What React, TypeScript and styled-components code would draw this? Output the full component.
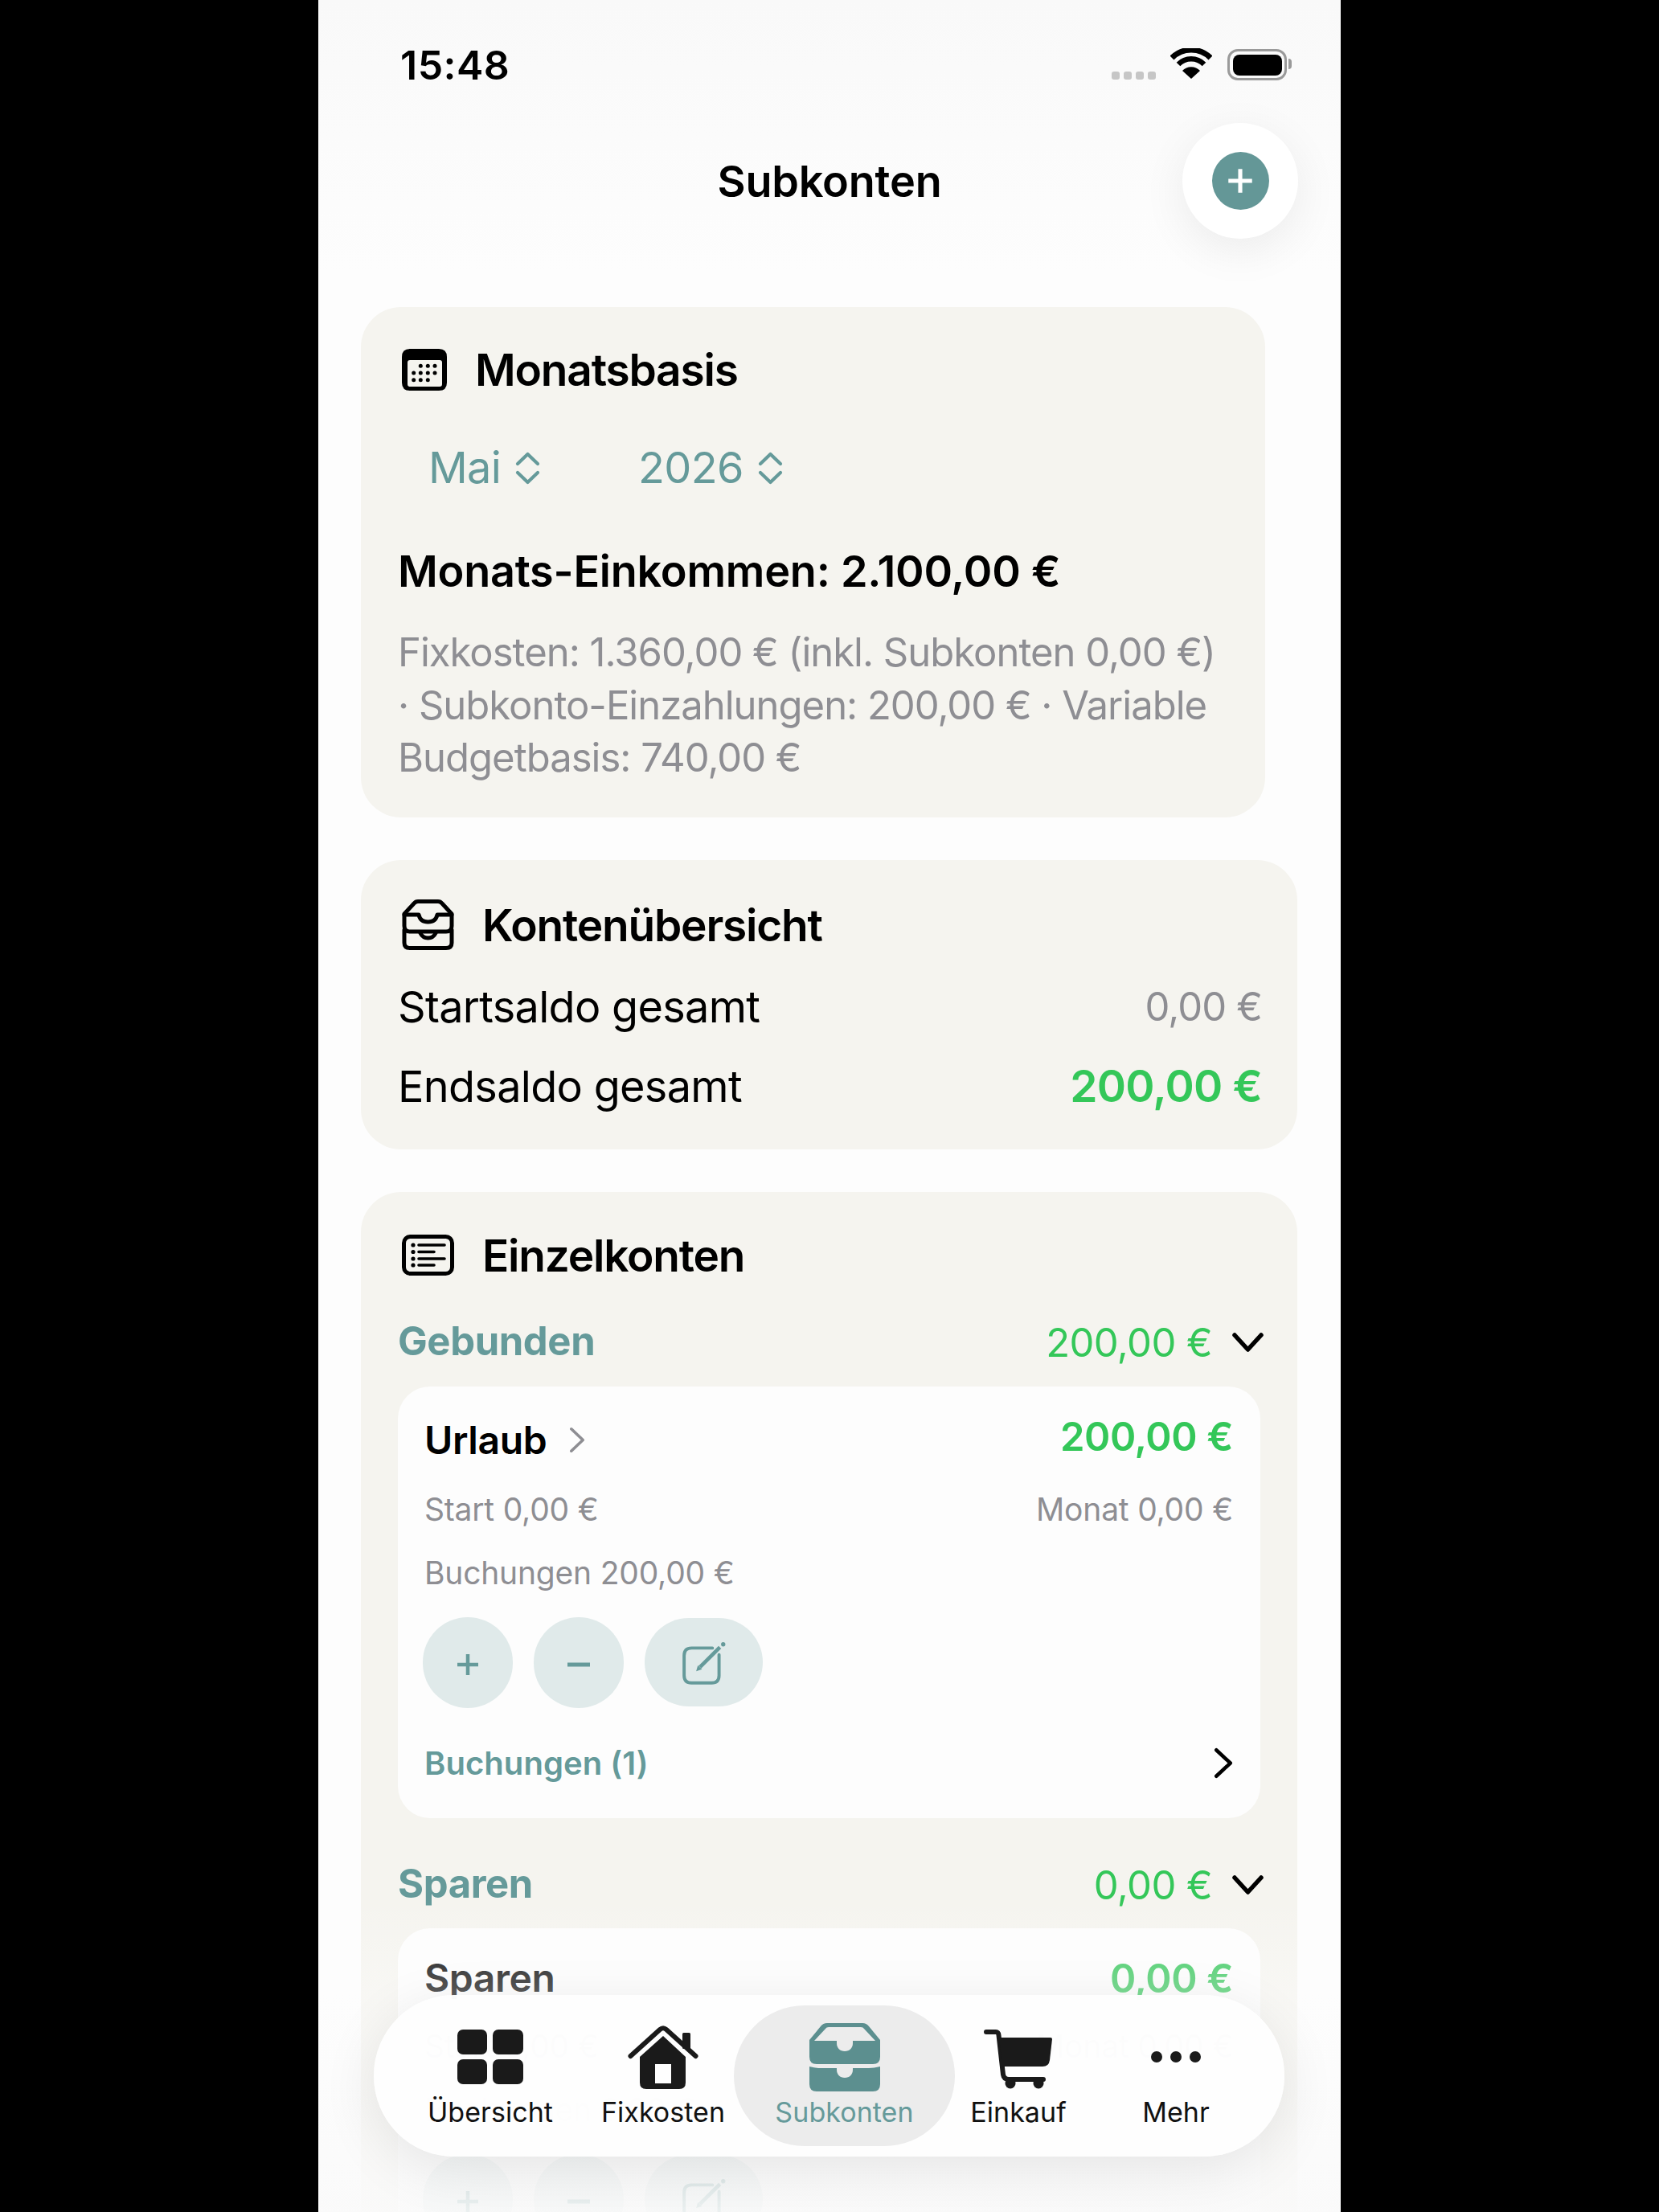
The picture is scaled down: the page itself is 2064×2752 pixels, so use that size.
import React from 'react';
import styled, { createGlobalStyle } from 'styled-components';

const teal = '#659a9a';
const tealDark = '#5c8f8f';
const green = '#34c759';
const gray = '#8e8e93';

const Global = createGlobalStyle`
  html, body { margin: 0; padding: 0; background: #000; }
  body { font-family: Inter, "Noto Sans", "Liberation Sans", sans-serif; -webkit-font-smoothing: antialiased; }
`;

const Stage = styled.div`
  width: 2064px;
  height: 2752px;
  display: flex;
  justify-content: center;
  background: #000;
  overflow: hidden;
`;
const Phone = styled.div`
  position: relative;
  width: 1272px;
  height: 2752px;
  overflow: hidden;
  background: linear-gradient(#f9f9f9 0, #fdfdfd 340px);
  color: #000;
`;
const StatusBar = styled.div`
  height: 153px;
  display: flex;
  justify-content: space-between;
  padding: 0 67px 0 102px;
  box-sizing: border-box;
`;
const Time = styled.div`
  font-size: 50px;
  font-weight: 600;
  line-height: 60px;
  margin-top: 51px;
  letter-spacing: 0.5px;
`;
const StatusIcons = styled.div`
  display: flex;
  align-items: flex-start;
  padding-top: 60px;
`;
const SignalDots = styled.div`
  display: flex;
  gap: 5px;
  margin: 29px 18px 0 0;
`;
const SignalDot = styled.span`
  width: 10px;
  height: 10px;
  border-radius: 3px;
  background: #c6c6c6;
`;
const Battery = styled.div`
  width: 74px;
  height: 39px;
  margin: 1px 0 0 19px;
  box-sizing: border-box;
  border: 3.5px solid #9a9a9a;
  border-radius: 13px;
  padding: 3.5px;
  position: relative;
  &::before {
    content: '';
    display: block;
    height: 100%;
    border-radius: 8px;
    background: #000;
  }
  &::after {
    content: '';
    position: absolute;
    right: -9px;
    top: 9px;
    width: 4px;
    height: 13px;
    border-radius: 0 4px 4px 0;
    background: #9a9a9a;
  }
`;
const Header = styled.header`
  height: 144px;
  display: grid;
  grid-template-columns: 1fr auto 1fr;
  align-items: center;
  padding: 0 53px;
`;
const Title = styled.h1`
  grid-column: 2;
  margin: 2px 0 0;
  font-size: 54px;
  font-weight: 600;
  line-height: 66px;
  letter-spacing: -0.2px;
`;
const AddButton = styled.div`
  justify-self: end;
  width: 144px;
  height: 144px;
  border-radius: 50%;
  background: #fff;
  box-shadow: 0 14px 56px rgba(0, 0, 0, 0.07);
  display: flex;
  align-items: center;
  justify-content: center;
`;
const AddDisc = styled.div`
  width: 71px;
  height: 72px;
  border-radius: 50%;
  background: #649797;
  display: flex;
  align-items: center;
  justify-content: center;
`;
const Content = styled.main`
  margin-top: 85px;
  padding: 0 54px 0 53px;
  display: flex;
  flex-direction: column;
  gap: 53px;
`;
const Card = styled.section<{ $inset?: number }>`
  background: #f5f4ef;
  border-radius: 50px;
  padding: 44px 46px 0;
  margin-right: ${p => p.$inset ?? 0}px;
`;
const CardHeader = styled.div<{ $height: number; $gap: number }>`
  display: flex;
  align-items: center;
  height: ${p => p.$height}px;
  gap: ${p => p.$gap}px;
  padding-left: 5px;
`;
const CardTitle = styled.h2`
  margin: 0;
  font-size: 55px;
  font-weight: 600;
  line-height: 66px;
  letter-spacing: -1.2px;
`;
const Pickers = styled.div`
  display: flex;
  gap: 122px;
  margin: 53px 0 0 38px;
  height: 70px;
  align-items: center;
`;
const Picker = styled.div`
  display: flex;
  align-items: center;
  gap: 18px;
  color: ${teal};
  font-size: 54px;
  line-height: 70px;
  letter-spacing: -0.7px;
`;
const Income = styled.div`
  margin-top: 61px;
  font-size: 54px;
  font-weight: 600;
  line-height: 66px;
  letter-spacing: -0.25px;
`;
const Note = styled.p`
  margin: 35px 0 0;
  padding-bottom: 41px;
  color: ${gray};
  font-size: 49px;
  line-height: 65.5px;
  letter-spacing: -1px;
  white-space: nowrap;
`;
const TotalRows = styled.div`
  margin: 15px -2px 0 0;
  padding-bottom: 29px;
`;
const TotalRow = styled.div`
  height: 99px;
  display: flex;
  align-items: center;
  justify-content: space-between;
`;
const TotalLabel = styled.span`
  font-size: 54px;
  letter-spacing: -0.7px;
`;
const TotalValue = styled.span<{ $strong?: boolean }>`
  font-size: ${p => (p.$strong ? 55 : 49)}px;
  font-weight: ${p => (p.$strong ? 600 : 400)};
  color: ${p => (p.$strong ? green : gray)};
  letter-spacing: ${p => (p.$strong ? -0.8 : -0.9)}px;
`;
const GroupHeader = styled.div<{ $top: number }>`
  height: 60px;
  margin-top: ${p => p.$top}px;
  margin-right: -4px;
  display: flex;
  align-items: center;
  justify-content: space-between;
`;
const GroupName = styled.span`
  color: ${teal};
  font-size: 49px;
  font-weight: 700;
  letter-spacing: -0.4px;
`;
const GroupTotal = styled.span`
  display: flex;
  align-items: center;
  gap: 25px;
  padding-top: 3px;
  color: ${green};
  font-size: 49px;
  letter-spacing: -0.6px;
`;
const Account = styled.article<{ $top: number }>`
  margin-top: ${p => p.$top}px;
  background: #fdfdfd;
  border-radius: 40px;
  padding: 32px 34px 38px 33px;
`;
const AccountHead = styled.div`
  display: flex;
  justify-content: space-between;
  align-items: flex-start;
`;
const AccountName = styled.div<{ $linked?: boolean }>`
  display: flex;
  align-items: center;
  gap: 28px;
  font-size: 48px;
  font-weight: 560;
  line-height: 60px;
  letter-spacing: -0.4px;
  padding-top: ${p => (p.$linked ? 5 : 0)}px;
`;
const AccountAmount = styled.span`
  color: ${green};
  font-size: 49px;
  font-weight: 600;
  line-height: 60px;
  letter-spacing: -0.4px;
  margin-top: 1px;
`;
const MetaRow = styled.div<{ $top: number }>`
  display: flex;
  justify-content: space-between;
  margin-top: ${p => p.$top}px;
  color: ${gray};
  font-size: 39px;
  line-height: 60px;
  letter-spacing: -0.2px;
`;
const Actions = styled.div`
  display: flex;
  align-items: center;
  gap: 26px;
  margin-top: 25px;
  margin-left: -2px;
`;
const RoundAction = styled.div<{ $wide?: boolean }>`
  width: ${p => (p.$wide ? 147 : 112)}px;
  height: ${p => (p.$wide ? 110 : 113)}px;
  border-radius: 56px;
  background: #e0eaea;
  display: flex;
  align-items: center;
  justify-content: center;
  padding: ${p => (p.$wide ? '2px 0 0 3px' : '6px 0 0')};
  box-sizing: border-box;
`;
const BookingLink = styled.div`
  height: 60px;
  margin-top: 39px;
  display: flex;
  align-items: center;
  justify-content: space-between;
  color: ${teal};
  font-size: 40px;
  font-weight: 560;
  letter-spacing: 0.05px;
`;
const Fade = styled.div`
  position: absolute;
  left: 0;
  right: 0;
  bottom: 0;
  height: 390px;
  background: linear-gradient(rgba(253, 253, 253, 0), rgba(253, 253, 253, 0.35) 30%, rgba(250, 250, 250, 0.9));
`;
const TabBar = styled.nav`
  position: absolute;
  left: 69px;
  top: 2482px;
  width: 1133px;
  height: 201px;
  box-sizing: border-box;
  padding: 13px 18px;
  display: grid;
  grid-template-columns: 254px 176px 275px 158px 234px;
  border-radius: 100px;
  background: rgba(254, 254, 254, 0.97);
  box-shadow: 0 16px 70px rgba(0, 0, 0, 0.09);
`;
const Tab = styled.div<{ $active?: boolean }>`
  display: flex;
  flex-direction: column;
  align-items: center;
  height: 175px;
  border-radius: 88px;
  background: ${p => (p.$active ? '#ececec' : 'transparent')};
  color: ${p => (p.$active ? teal : '#111')};
`;
const TabIcon = styled.div<{ $lift: number }>`
  height: 110px;
  display: flex;
  align-items: flex-end;
  justify-content: center;
  padding-bottom: ${p => p.$lift}px;
  box-sizing: border-box;
`;
const TabLabel = styled.span`
  font-size: 34px;
  line-height: 46px;
  letter-spacing: 0.05px;
  white-space: nowrap;
`;

const Plus = ({ size, width, color }: { size: number; width: number; color: string }) => (
  <svg width={size} height={size} viewBox="0 0 30 30">
    <path d="M15 2v26M2 15h26" stroke={color} strokeWidth={width} fill="none" />
  </svg>
);
const Wifi = () => (
  <svg width="52" height="38" viewBox="0 0 52 38">
    <path d="M2 12 A34 34 0 0 1 50 12" fill="none" stroke="#000" strokeWidth="7" />
    <path d="M10 20 A22.5 22.5 0 0 1 42 20" fill="none" stroke="#000" strokeWidth="6.5" />
    <path d="M26 38 L15 28 A15 15 0 0 1 37 28 Z" fill="#000" />
  </svg>
);
const CalendarIcon = () => (
  <svg width="56" height="52" viewBox="0 0 56 52">
    <path fillRule="evenodd" d="M10 0H46Q56 0 56 10V42Q56 52 46 52H10Q0 52 0 42V10Q0 0 10 0ZM10 14Q7 14 7 17V44Q7 47 10 47H47Q50 47 50 44V17Q50 14 47 14Z" fill="#000" />
    {[[23.3, 21.3], [32.3, 21.3], [41, 21.3], [14.7, 30], [23.3, 30], [32.3, 30], [41, 30], [14.7, 38.7], [23.3, 38.7], [32.3, 38.7]].map(([x, y]) => (
      <circle key={`${x}-${y}`} cx={x} cy={y} r="2.5" fill="#000" />
    ))}
  </svg>
);
const TrayIcon = () => (
  <svg width="65" height="63" viewBox="0 0 65 63" fill="none" stroke="#000" strokeWidth="5" strokeLinejoin="round" strokeLinecap="round">
    <path d="M3 18L15 5Q17 2.5 20 2.5H45Q48 2.5 50 5L62 18V33Q62 40 55 40H10Q3 40 3 33Z" />
    <path d="M3 19H21C22 24 25 28 32.5 28C40 28 43 24 44 19H62" />
    <path d="M3 38V54Q3 60.5 10 60.5H55Q62 60.5 62 54V38" />
    <path d="M23 42C25 46 28 48 32.5 48C37 48 40 46 42 42" />
  </svg>
);
const ListIcon = () => (
  <svg width="65" height="51" viewBox="0 0 65 51" fill="none" stroke="#000" strokeLinecap="round">
    <rect x="2.5" y="2.5" width="60" height="46" rx="8" strokeWidth="5" />
    <path d="M21 13H53M21 21.5H40M21 30H53M21 38H40" strokeWidth="3.6" />
    <g fill="#000" stroke="none">
      <circle cx="14" cy="13" r="2.6" />
      <circle cx="14" cy="21.5" r="2.6" />
      <circle cx="14" cy="30" r="2.6" />
      <circle cx="14" cy="38" r="2.6" />
    </g>
  </svg>
);
const UpDown = () => (
  <svg width="31" height="41" viewBox="0 0 31 41" fill="none" stroke={teal} strokeWidth="4.2" strokeLinecap="round" strokeLinejoin="round">
    <path d="M3 15L15.5 3L28 15M3 26L15.5 38L28 26" />
  </svg>
);
const DownChevron = () => (
  <svg width="39" height="24" viewBox="0 0 39 24" fill="none" stroke="#000" strokeWidth="5.5" strokeLinecap="round" strokeLinejoin="round">
    <path d="M3 3L19.5 21L36 3" />
  </svg>
);
const SideChevron = ({ color, w, h, stroke }: { color: string; w: number; h: number; stroke: number }) => (
  <svg width={w} height={h} viewBox={`0 0 ${w} ${h}`} fill="none" stroke={color} strokeWidth={stroke} strokeLinecap="round" strokeLinejoin="round">
    <path d={`M${stroke / 2 + 1} ${stroke / 2 + 1}L${w - stroke / 2 - 1} ${h / 2}L${stroke / 2 + 1} ${h - stroke / 2 - 1}`} />
  </svg>
);
const Minus = () => (
  <svg width="30" height="30" viewBox="0 0 30 30">
    <path d="M1 15H29" stroke={teal} strokeWidth="5" />
  </svg>
);
const EditIcon = () => (
  <svg width="58" height="60" viewBox="0 0 56 58" fill="none">
    <path d="M37 11H12Q3 11 3 20V44Q3 53 12 53H36Q45 53 45 44V19" stroke={teal} strokeWidth="3.8" strokeLinecap="round" />
    <path d="M22 34L46 10" stroke={teal} strokeWidth="4.5" />
    <path d="M17.5 39L19.5 32L24.5 36.5Z" fill={teal} />
    <circle cx="50" cy="6.5" r="2.6" fill={teal} />
  </svg>
);
const GridIcon = () => (
  <svg width="82" height="68" viewBox="0 0 82 68" fill="#1a1a1a">
    <rect x="0" y="0" width="37" height="31" rx="7" />
    <rect x="44" y="0" width="38" height="31" rx="7" />
    <rect x="0" y="37" width="37" height="31" rx="7" />
    <rect x="44" y="37" width="38" height="31" rx="7" />
  </svg>
);
const HouseIcon = () => (
  <svg width="88" height="79" viewBox="0 0 88 79" fill="#1a1a1a">
    <path d="M3.5 38L40 5Q44 1.500 48 5L84.500 38" fill="none" stroke="#1a1a1a" strokeWidth="6" strokeLinecap="round" strokeLinejoin="round" />
    <rect x="68" y="9" width="10" height="20" rx="1.500" />
    <path fillRule="evenodd" d="M44 13L72 39V71Q72 79 64 79H23Q15 79 15 71V39ZM34 48V72H54V48Z" />
  </svg>
);
const FilledTray = () => (
  <svg width="88" height="85" viewBox="0 0 88 85" fill={tealDark}>
    <path fillRule="evenodd" d="M0 21L14 4Q17 0 22 0H66Q71 0 74 4L88 21V42Q88 51 79 51H9Q0 51 0 42ZM6 22L20 7Q21 5 24 5H64Q67 5 68 7L82 22H54V25C54 31 50 35 44 35C38 35 34 31 34 25V22Z" />
    <path d="M0 54Q8 56 14 56H34V58C34 64 38 68 44 68C50 68 54 64 54 58V56H74Q80 56 88 54V76Q88 85 79 85H9Q0 85 0 76Z" />
  </svg>
);
const CartIcon = () => (
  <svg width="86" height="75" viewBox="0 0 86 75" fill="#1a1a1a">
    <path d="M3 3H15Q18 3 18.5 7L24 56Q25 62 31 62H74" fill="none" stroke="#1a1a1a" strokeWidth="6" strokeLinecap="round" strokeLinejoin="round" />
    <path d="M19 10H83Q85 10 85 12L82 38Q81 46 73 46H23Z" />
    <circle cx="33" cy="67" r="6.5" />
    <circle cx="68" cy="67" r="6.5" />
  </svg>
);
const DotsIcon = () => (
  <svg width="62" height="16" viewBox="0 0 62 16" fill="#1a1a1a">
    <circle cx="7" cy="8" r="7" />
    <circle cx="31" cy="8" r="7" />
    <circle cx="55" cy="8" r="7" />
  </svg>
);

const AccountActions = () => (
  <Actions>
    <RoundAction><Plus size={30} width={4.5} color={teal} /></RoundAction>
    <RoundAction><Minus /></RoundAction>
    <RoundAction $wide><EditIcon /></RoundAction>
  </Actions>
);

const tabs = [
  { label: 'Übersicht', icon: <GridIcon />, lift: 12 },
  { label: 'Fixkosten', icon: <HouseIcon />, lift: 6 },
  { label: 'Subkonten', icon: <FilledTray />, lift: 3, active: true },
  { label: 'Einkauf', icon: <CartIcon />, lift: 5 },
  { label: 'Mehr', icon: <DotsIcon />, lift: 38 },
];

export default function App() {
  return (
    <Stage>
      <Global />
      <Phone>
        <StatusBar>
          <Time>15:48</Time>
          <StatusIcons>
            <SignalDots>
              <SignalDot /><SignalDot /><SignalDot /><SignalDot />
            </SignalDots>
            <Wifi />
            <Battery />
          </StatusIcons>
        </StatusBar>
        <Header>
          <Title>Subkonten</Title>
          <AddButton>
            <AddDisc><Plus size={34} width={4.5} color="#fff" /></AddDisc>
          </AddButton>
        </Header>
        <Content>
          <Card $inset={40}>
            <CardHeader $height={68} $gap={35}>
              <CalendarIcon />
              <CardTitle>Monatsbasis</CardTitle>
            </CardHeader>
            <Pickers>
              <Picker>Mai <UpDown /></Picker>
              <Picker>2026 <UpDown /></Picker>
            </Pickers>
            <Income>Monats-Einkommen: 2.100,00 €</Income>
            <Note>
              Fixkosten: 1.360,00 € (inkl. Subkonten 0,00 €)<br />
              · Subkonto-Einzahlungen: 200,00 € · Variable<br />
              Budgetbasis: 740,00 €
            </Note>
          </Card>
          <Card>
            <CardHeader $height={74} $gap={35}>
              <TrayIcon />
              <CardTitle>Kontenübersicht</CardTitle>
            </CardHeader>
            <TotalRows>
              <TotalRow>
                <TotalLabel>Startsaldo gesamt</TotalLabel>
                <TotalValue>0,00 €</TotalValue>
              </TotalRow>
              <TotalRow>
                <TotalLabel>Endsaldo gesamt</TotalLabel>
                <TotalValue $strong>200,00 €</TotalValue>
              </TotalRow>
            </TotalRows>
          </Card>
          <Card>
            <CardHeader $height={70} $gap={35}>
              <ListIcon />
              <CardTitle>Einzelkonten</CardTitle>
            </CardHeader>
            <GroupHeader $top={42}>
              <GroupName>Gebunden</GroupName>
              <GroupTotal>200,00 € <DownChevron /></GroupTotal>
            </GroupHeader>
            <Account $top={26}>
              <AccountHead>
                <AccountName $linked>
                  Urlaub
                  <SideChevron color={gray} w={20} h={33} stroke={3.6} />
                </AccountName>
                <AccountAmount>200,00 €</AccountAmount>
              </AccountHead>
              <MetaRow $top={26}>
                <span>Start 0,00 €</span>
                <span>Monat 0,00 €</span>
              </MetaRow>
              <MetaRow $top={19}>
                <span>Buchungen 200,00 €</span>
              </MetaRow>
              <AccountActions />
              <BookingLink>
                Buchungen (1)
                <SideChevron color="#000" w={24} h={39} stroke={4.5} />
              </BookingLink>
            </Account>
            <GroupHeader $top={52}>
              <GroupName>Sparen</GroupName>
              <GroupTotal>0,00 € <DownChevron /></GroupTotal>
            </GroupHeader>
            <Account $top={25}>
              <AccountHead>
                <AccountName>Sparen</AccountName>
                <AccountAmount>0,00 €</AccountAmount>
              </AccountHead>
              <MetaRow $top={24}>
                <span>Start 0,00 €</span>
                <span>Monat 0,00 €</span>
              </MetaRow>
              <MetaRow $top={19}>
                <span>Buchungen 0,00 €</span>
              </MetaRow>
              <AccountActions />
            </Account>
          </Card>
        </Content>
        <Fade />
        <TabBar>
          {tabs.map(t => (
            <Tab key={t.label} $active={t.active}>
              <TabIcon $lift={t.lift}>{t.icon}</TabIcon>
              <TabLabel>{t.label}</TabLabel>
            </Tab>
          ))}
        </TabBar>
      </Phone>
    </Stage>
  );
}
